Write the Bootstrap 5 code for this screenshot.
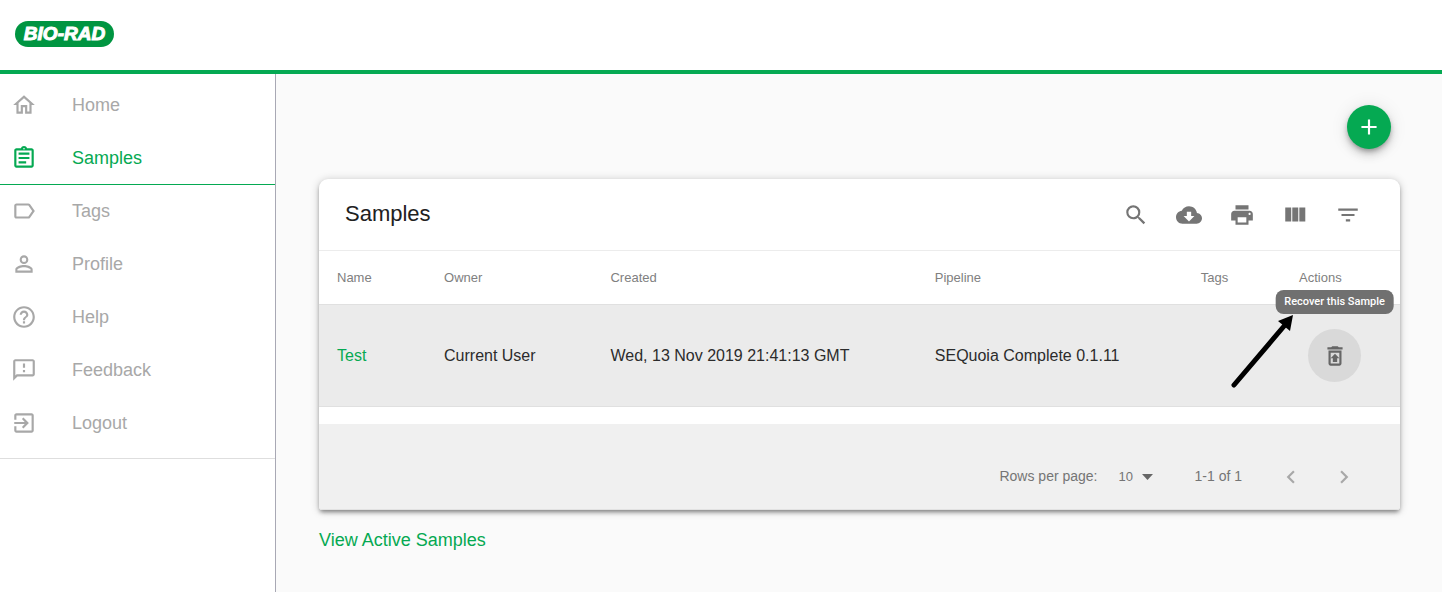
<!DOCTYPE html>
<html lang="en">
<head>
<meta charset="utf-8">
<meta name="viewport" content="width=device-width, initial-scale=1">
<title>Samples</title>
<link href="https://cdn.jsdelivr.net/npm/bootstrap@5.3.0/dist/css/bootstrap.min.css" rel="stylesheet">
<style>
  :root { --brand: #05a952; --ink-soft: #757575; }
  body { font-family: "Liberation Sans", Arial, sans-serif; background: #fafafa; color: #212121; }
  svg { fill: currentColor; display: block; flex: none; }

  .topbar { height: 74px; border-bottom: 4px solid var(--brand); padding: 21px 15px 0; }
  .brand-pill { width: 99px; height: 26px; border-radius: 13px; background: #009541; color: #fff; font-size: 19px; line-height: 26px; font-weight: 700; font-style: italic; text-decoration: none; -webkit-text-stroke: 1px #fff; }

  .sidebar { width: 276px; border-right: 1px solid #a8a8b4; }
  .side-list { padding: 5px 0 8px; border-bottom: 1px solid #dedede; }
  .side-list .nav-link { height: 53px; padding: 0 11px; gap: 35px; font-size: 18px; color: #a8a8a8; border-bottom: 1px solid transparent; }
  .side-list .nav-link.active { color: var(--brand); border-bottom-color: var(--brand); }

  .content { padding: 31px 42px 0 43px; }
  .fab { width: 44px; height: 44px; margin-right: 9px; background: var(--brand); color: #fff; box-shadow: 0 3px 5px -1px rgba(0,0,0,.3), 0 6px 10px rgba(0,0,0,.14), 0 1px 18px rgba(0,0,0,.1); }
  .panel { margin-top: 30px; background: #fff; border-radius: 9px 9px 3px 3px; box-shadow: 0 3px 4px -1px rgba(0,0,0,.4), 0 1px 9px rgba(0,0,0,.22); }
  .panel-head { height: 71px; padding: 0 26px; }
  .panel-head h1 { font-size: 22px; }
  .tool { width: 53px; height: 53px; color: var(--ink-soft); }
  .tool:disabled { color: #a8a8a8; opacity: 1; border: 0; }

  .sample-table { table-layout: fixed; }
  .sample-table th { height: 54px; padding: 0 0 0 18px; font-size: 13px; font-weight: 400; vertical-align: middle; color: #808080; border-top: 1px solid #ececec; border-bottom: 1px solid #e0e0e0; background: #fff; }
  .sample-table td { height: 102px; padding: 0 0 0 18px; font-size: 16px; color: #2c2c2c; background: #ebebeb; border-bottom: 1px solid #e0e0e0; }
  .green-link { color: var(--brand); text-decoration: none; }
  .recover { margin-left: 9px; background: #d9d9d9 !important; color: #666; }
  .tip { bottom: 100%; left: 50%; transform: translateX(-50%); margin-bottom: 15px; padding: 0 9px; border-radius: 8px; background: #707070; color: #fff; font: 500 11px/24px Roboto, sans-serif; white-space: nowrap; }
  .pointer { left: -78px; top: -17px; color: #000; pointer-events: none; }

  .panel-foot { margin-top: 17px; height: 86px; padding: 26px 30px 6px; background: #f0f0f0; border-bottom: 1px solid #e2e2e2; border-radius: 0 0 3px 3px; font-size: 14px; color: var(--ink-soft); }
  .page-size { appearance: none; width: 37px; margin: 0 39px 0 21px; padding: 0; border: 0; font-size: 13px; color: var(--ink-soft); background: url("data:image/svg+xml,%3Csvg xmlns='http://www.w3.org/2000/svg' width='11' height='6'%3E%3Cpath d='M0 0h11l-5.500 6z' fill='%23666'/%3E%3C/svg%3E") no-repeat 23px center; }
  .count { margin-right: 22px; }
  .after { margin-top: 17px; font-size: 18px; }
</style>
</head>
<body>
<div class="d-flex flex-column min-vh-100">
  <header class="topbar bg-white">
    <a class="brand-pill d-flex justify-content-center" href="#">BIO-RAD</a>
  </header>

  <div class="d-flex flex-grow-1">
    <aside class="sidebar bg-white flex-shrink-0">
      <nav class="side-list nav flex-column">
        <a class="nav-link d-flex align-items-center" href="#"><svg width="26" height="26" viewBox="0 0 24 24"><path d="M12 5.690l5 4.500V18h-2v-6H9v6H7v-7.810l5-4.500M12 3L2 12h3v8h6v-6h2v6h6v-8h3L12 3z"/></svg>Home</a>
        <a class="nav-link active d-flex align-items-center" href="#" aria-current="page"><svg width="26" height="26" viewBox="0 0 24 24"><path d="M7 15h7v2H7zm0-4h10v2H7zm0-4h10v2H7zm12-4h-4.180C14.400 1.840 13.300 1 12 1s-2.400.84-2.820 2H5c-1.100 0-2 .9-2 2v14c0 1.100.9 2 2 2h14c1.100 0 2-.9 2-2V5c0-1.100-.9-2-2-2zm-7-.25c.41 0 .75.34.75.75s-.34.75-.75.75-.75-.34-.75-.75.34-.75.750-.75zM19 19H5V5h14v14z"/></svg>Samples</a>
        <a class="nav-link d-flex align-items-center" href="#"><svg width="26" height="26" viewBox="0 0 24 24"><path d="M17.630 5.840C17.270 5.330 16.670 5 16 5L5 5.010C3.900 5.010 3 5.900 3 7v10c0 1.100.9 1.990 2 1.990L16 19c.67 0 1.270-.33 1.630-.84L22 12l-4.370-6.160zM16 17H5V7h11l3.550 5L16 17z"/></svg>Tags</a>
        <a class="nav-link d-flex align-items-center" href="#"><svg width="26" height="26" viewBox="0 0 24 24"><path d="M12 5.900a2.100 2.100 0 1 1 0 4.200 2.100 2.100 0 0 1 0-4.200m0 9c2.970 0 6.100 1.460 6.100 2.100v1.100H5.900V17c0-.64 3.130-2.100 6.100-2.100M12 4C9.790 4 8 5.790 8 8s1.790 4 4 4 4-1.790 4-4-1.790-4-4-4zm0 9c-2.670 0-8 1.340-8 4v3h16v-3c0-2.660-5.330-4-8-4z"/></svg>Profile</a>
        <a class="nav-link d-flex align-items-center" href="#"><svg width="26" height="26" viewBox="0 0 24 24"><path d="M11 18h2v-2h-2v2zm1-16C6.480 2 2 6.480 2 12s4.480 10 10 10 10-4.480 10-10S17.520 2 12 2zm0 18c-4.410 0-8-3.590-8-8s3.590-8 8-8 8 3.590 8 8-3.590 8-8 8zm0-14c-2.210 0-4 1.790-4 4h2c0-1.100.9-2 2-2s2 .9 2 2c0 2-3 1.750-3 5h2c0-2.250 3-2.500 3-5 0-2.210-1.790-4-4-4z"/></svg>Help</a>
        <a class="nav-link d-flex align-items-center" href="#"><svg width="26" height="26" viewBox="0 0 24 24"><path d="M20 2H4c-1.100 0-1.990.9-1.990 2L2 22l4-4h14c1.100 0 2-.9 2-2V4c0-1.100-.9-2-2-2zm0 14H5.170L4 17.170V4h16v12zM11 12h2v2h-2zM11 6h2v4h-2z"/></svg>Feedback</a>
        <a class="nav-link d-flex align-items-center" href="#"><svg width="26" height="26" viewBox="0 0 24 24"><path d="M10.090 15.590L11.500 17l5-5-5-5-1.410 1.410L12.670 11H3v2h9.670l-2.580 2.590zM19 3H5c-1.110 0-2 .9-2 2v4h2V5h14v14H5v-4H3v4c0 1.100.89 2 2 2h14c1.100 0 2-.9 2-2V5c0-1.100-.9-2-2-2z"/></svg>Logout</a>
      </nav>
    </aside>

    <main class="content flex-grow-1">
      <div class="d-flex justify-content-end">
        <button class="fab btn rounded-circle border-0 p-0 d-flex align-items-center justify-content-center" type="button" aria-label="Add sample"><svg width="26" height="26" viewBox="0 0 24 24"><path d="M19 13h-6v6h-2v-6H5v-2h6V5h2v6h6v2z"/></svg></button>
      </div>

      <section class="panel">
        <div class="panel-head d-flex align-items-center justify-content-between">
          <h1 class="m-0 fw-normal">Samples</h1>
          <div class="d-flex">
            <button class="tool btn border-0 p-0 d-flex align-items-center justify-content-center" type="button" aria-label="Search"><svg width="26" height="26" viewBox="0 0 24 24"><path d="M15.500 14h-.79l-.28-.27A6.471 6.471 0 0 0 16 9.500 6.500 6.500 0 1 0 9.500 16c1.610 0 3.090-.59 4.230-1.570l.27.28v.79l5 4.990L20.490 19l-4.990-5zm-6 0C7.010 14 5 11.990 5 9.500S7.010 5 9.500 5 14 7.010 14 9.500 11.990 14 9.500 14z"/></svg></button>
            <button class="tool btn border-0 p-0 d-flex align-items-center justify-content-center" type="button" aria-label="Download"><svg width="26" height="26" viewBox="0 0 24 24"><path d="M19.350 10.040C18.670 6.590 15.640 4 12 4 9.110 4 6.600 5.640 5.350 8.040 2.340 8.360 0 10.910 0 14c0 3.310 2.690 6 6 6h13c2.760 0 5-2.240 5-5 0-2.640-2.050-4.780-4.650-4.960zM17 13l-5 5-5-5h3V9h4v4h3z"/></svg></button>
            <button class="tool btn border-0 p-0 d-flex align-items-center justify-content-center" type="button" aria-label="Print"><svg width="26" height="26" viewBox="0 0 24 24"><path d="M19 8H5c-1.660 0-3 1.340-3 3v6h4v4h12v-4h4v-6c0-1.660-1.340-3-3-3zm-3 11H8v-5h8v5zm3-7c-.55 0-1-.45-1-1s.45-1 1-1 1 .45 1 1-.45 1-1 1zm-1-9H6v4h12V3z"/></svg></button>
            <button class="tool btn border-0 p-0 d-flex align-items-center justify-content-center" type="button" aria-label="View columns"><svg width="26" height="26" viewBox="0 0 24 24"><path d="M9.500 18h5.500V5H9.500v13zM3 18h5.500V5H3v13zM16 5v13h5.500V5H16z"/></svg></button>
            <button class="tool btn border-0 p-0 d-flex align-items-center justify-content-center" type="button" aria-label="Filter"><svg width="26" height="26" viewBox="0 0 24 24"><path d="M10 18h4v-2h-4v2zM3 6v2h18V6H3zm3 7h12v-2H6v2z"/></svg></button>
          </div>
        </div>

        <table class="sample-table table table-borderless align-middle m-0">
          <colgroup><col style="width:9.9%"><col style="width:15.4%"><col style="width:30%"><col style="width:24.6%"><col style="width:9.1%"><col style="width:11%"></colgroup>
          <thead>
            <tr><th scope="col">Name</th><th scope="col">Owner</th><th scope="col">Created</th><th scope="col">Pipeline</th><th scope="col">Tags</th><th scope="col">Actions</th></tr>
          </thead>
          <tbody>
            <tr>
              <td><a class="green-link" href="#">Test</a></td>
              <td>Current User</td>
              <td>Wed, 13 Nov 2019 21:41:13 GMT</td>
              <td>SEQuoia Complete 0.1.11</td>
              <td></td>
              <td>
                <button class="tool recover btn rounded-circle border-0 p-0 d-flex align-items-center justify-content-center position-relative" type="button" aria-label="Recover this Sample">
                  <svg width="26" height="26" viewBox="0 0 24 24"><path d="M19 4h-3.500l-1-1h-5l-1 1H5v2h14V4zM6 7v12c0 1.100.9 2 2 2h8c1.100 0 2-.9 2-2V7H6zm2 2h8v10H8V9zm2 8.500V14H8l4-4 4 4h-2v3.500z"/></svg>
                  <span class="tip position-absolute" role="tooltip">Recover this Sample</span>
                  <svg class="pointer position-absolute" width="66" height="78" viewBox="0 0 66 78"><path d="M4 73L55 13" fill="none" stroke="#000" stroke-width="5" stroke-linecap="round"/><path d="M63 3L60 19 48 9z"/></svg>
                </button>
              </td>
            </tr>
          </tbody>
        </table>

        <div class="panel-foot d-flex align-items-center justify-content-end">
          <label for="pageSize">Rows per page:</label>
          <select id="pageSize" class="page-size"><option>10</option><option>15</option><option>100</option></select>
          <span class="count">1-1 of 1</span>
          <button class="tool btn border-0 p-0 d-flex align-items-center justify-content-center" type="button" aria-label="Previous page" disabled><svg width="26" height="26" viewBox="0 0 24 24"><path d="M15.410 7.410L14 6l-6 6 6 6 1.410-1.410L10.830 12z"/></svg></button>
          <button class="tool btn border-0 p-0 d-flex align-items-center justify-content-center" type="button" aria-label="Next page" disabled><svg width="26" height="26" viewBox="0 0 24 24"><path d="M10 6L8.590 7.410 13.170 12l-4.580 4.590L10 18l6-6z"/></svg></button>
        </div>
      </section>

      <p class="after mb-0"><a class="green-link" href="#">View Active Samples</a></p>
    </main>
  </div>
</div>
<script src="https://cdn.jsdelivr.net/npm/bootstrap@5.3.0/dist/js/bootstrap.bundle.min.js"></script>
</body>
</html>
